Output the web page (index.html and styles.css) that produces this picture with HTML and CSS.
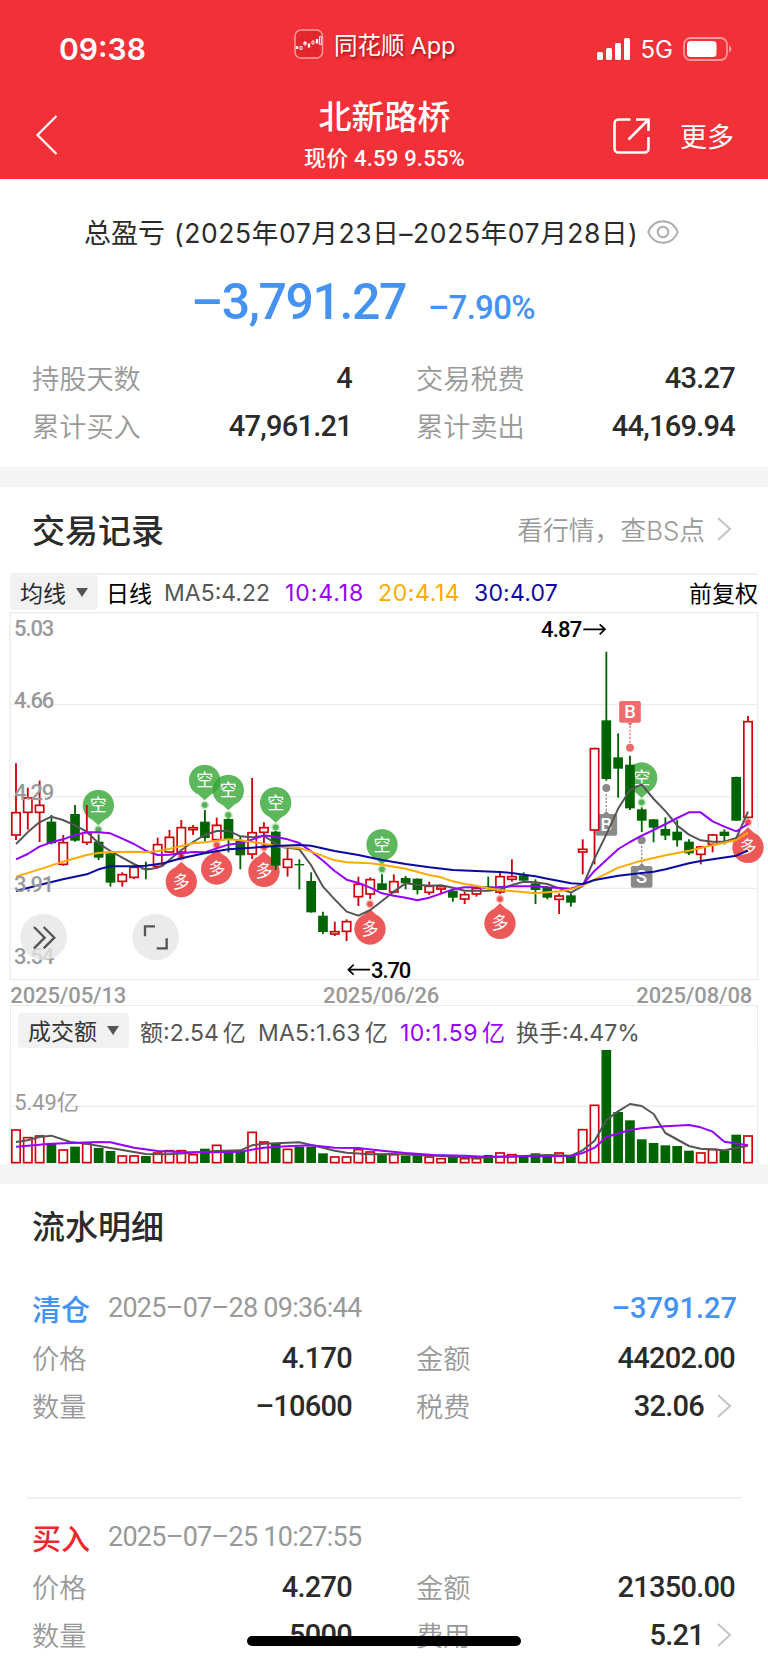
FILE: index.html
```html
<!DOCTYPE html>
<html lang="zh-CN">
<head>
  <meta charset="UTF-8" />
  <meta name="viewport" content="width=device-width, initial-scale=1" />
  <title>北新路桥 - 交易记录</title>
  <link rel="stylesheet" href="styles.css">
</head>
<body>
  <header class="header">
    <div class="status-bar">
      <span class="time">09:38</span>
      <div class="app">
        <svg class="app-icon" width="30" height="30" viewBox="0 0 30 30">
          <rect x="1" y="1" width="27.500" height="28" rx="6" fill="#e4282d" stroke="#ff9a9c" stroke-width="1.500" />
          <path d="M2 22h25M2 11h25M8 3v24M14 3v24M21 3v24" stroke="#d5222a" stroke-width=".6" />
          <path d="M3 17v3M11 13v1.500M15 14.500v4M23 10v4.500" stroke="#fff" stroke-width="2.400" />
          <path d="M6 17.500h2v3H6zM10 13h2v3h-2zM18 12h2v3h-2zM25.500 7.500h1.800v8h-1.800z" fill="none" stroke="#fff" stroke-width=".9" />
        </svg>
        <span>同花顺<i>App</i></span>
      </div>
      <div class="phone">
        <svg width="35" height="24" viewBox="0 0 35 24" fill="#fff">
          <rect x="1" y="15" width="6" height="8" rx="1.500" />
          <rect x="10" y="11" width="6" height="12" rx="1.500" />
          <rect x="19" y="6" width="6" height="17" rx="1.500" />
          <rect x="28" y="1" width="6" height="22" rx="1.500" />
        </svg>
        <span>5G</span>
        <svg width="49" height="24" viewBox="0 0 49 24">
          <rect x="1" y="1" width="43" height="22" rx="6.500" fill="none" stroke="#fff" stroke-opacity=".5" stroke-width="1.800" />
          <rect x="4" y="4" width="29.500" height="16" rx="3.500" fill="#fff" />
          <path d="M46 8.500q2.500 1 2.500 3.500t-2.500 3.500z" fill="#fff" fill-opacity=".5" />
        </svg>
      </div>
    </div>
    <div class="nav">
      <svg class="back" width="24" height="42" viewBox="0 0 24 42" fill="none" stroke="#fff" stroke-width="2.200">
        <path d="M21.500 2L2.500 21l19 19" />
      </svg>
      <div class="nav-title">
        <h1>北新路桥</h1>
        <p>现价 4.59 9.55%</p>
      </div>
      <div class="nav-right">
        <svg width="38" height="38" viewBox="0 0 38 38" fill="none" stroke="#fff" stroke-width="2.600">
          <path d="M18.500 2.500H6.500a4 4 0 0 0-4 4v25a4 4 0 0 0 4 4h26a4 4 0 0 0 4-4V20M24 2.500h12.500V14M36 3L16.500 22.500" />
        </svg>
        <span>更多</span>
      </div>
    </div>
  </header>

  <section class="summary">
    <div class="period">
      <span class="period-name">总盈亏</span>
      <span class="period-date">(2025年07月23日–2025年07月28日)</span>
      <svg width="32" height="24" viewBox="0 0 32 24" fill="none" stroke="#aaa" stroke-width="1.900">
        <path d="M1.200 12C4 5 9.500 1.200 16 1.200S28 5 30.800 12C28 19 22.500 22.800 16 22.800S4 19 1.200 12z" />
        <circle cx="16" cy="12" r="5.300" />
      </svg>
    </div>
    <div class="profit">
      <span class="profit-num">–3,791.27</span>
      <span class="profit-rate">–7.90%</span>
    </div>
    <div class="grid">
      <div class="cell"><label>持股天数</label><b>4</b></div>
      <div class="cell"><label>交易税费</label><b>43.27</b></div>
      <div class="cell"><label>累计买入</label><b>47,961.21</b></div>
      <div class="cell"><label>累计卖出</label><b>44,169.94</b></div>
    </div>
  </section>

  <section class="trade">
    <div class="section-head">
      <h2>交易记录</h2>
      <div class="more">
        <span>看行情，查BS点</span>
        <svg width="16" height="24" viewBox="0 0 16 24" fill="none" stroke="#c4c4c4" stroke-width="2"><path d="M2 1l12 11L2 23" /></svg>
      </div>
    </div>
    <div class="ma-bar">
      <span class="chip">均线<i class="arrow"></i></span>
      <span class="day">日线</span>
      <span class="ma5">MA5:4.22</span>
      <span class="ma10">10:4.18</span>
      <span class="ma20">20:4.14</span>
      <span class="ma30">30:4.07</span>
      <span class="adjust">前复权</span>
    </div>
    <svg id="price" class="price" viewBox="0 0 2304 1185"></svg>
    <div class="vol-bar">
      <span class="chip chip-vol">成交额<i class="arrow"></i></span>
      <span class="v1">额:2.54<em>亿</em></span>
      <span class="v2">MA5:1.63<em>亿</em></span>
      <span class="v3">10:1.59<em>亿</em></span>
      <span class="v4">换手:4.47%</span>
    </div>
    <svg id="volume" class="volume" viewBox="0 237 2304 345"></svg>
  </section>

  <section class="flow">
    <h2>流水明细</h2>
    <div class="record">
      <div class="record-head">
        <strong class="sell">清仓</strong>
        <time>2025–07–28 09:36:44</time>
        <b class="sell">–3791.27</b>
      </div>
      <div class="grid">
        <div class="cell"><label>价格</label><b>4.170</b></div>
        <div class="cell"><label>金额</label><b>44202.00</b></div>
        <div class="cell"><label>数量</label><b>–10600</b></div>
        <div class="cell">
          <label>税费</label><b>32.06</b>
          <svg width="16" height="24" viewBox="0 0 16 24" fill="none" stroke="#c4c4c4" stroke-width="2"><path d="M2 1l12 11L2 23" /></svg>
        </div>
      </div>
    </div>
    <div class="record record-buy">
      <div class="record-head">
        <strong class="buy">买入</strong>
        <time>2025–07–25 10:27:55</time>
      </div>
      <div class="grid">
        <div class="cell"><label>价格</label><b>4.270</b></div>
        <div class="cell"><label>金额</label><b>21350.00</b></div>
        <div class="cell"><label>数量</label><b>5000</b></div>
        <div class="cell">
          <label>费用</label><b>5.21</b>
          <svg width="16" height="24" viewBox="0 0 16 24" fill="none" stroke="#c4c4c4" stroke-width="2"><path d="M2 1l12 11L2 23" /></svg>
        </div>
      </div>
    </div>
  </section>
  <div class="home-bar"></div>

  <script src="chart.js"></script>
</body>
</html>
```
FILE: styles.css
```css
* {
  box-sizing: border-box;
}
body {
  margin: 0;
  width: 768px;
  height: 1663px;
  overflow: hidden;
  background: #fff;
  color: #2b2b2b;
  font-family: Inter, "Noto Sans CJK SC", sans-serif;
}
h1, h2, p {
  margin: 0;
}
i, em {
  font-style: normal;
}
svg {
  display: block;
  flex: none;
}

/* 顶部 */
.header {
  height: 179px;
  background: #f23038;
  color: #fff;
}
.status-bar {
  height: 92px;
  display: grid;
  grid-template-columns: 235px auto 1fr;
  align-items: center;
  padding: 6px 36px 0 59px;
}
.time {
  font-size: 30px;
  font-weight: 600;
}
.app {
  display: flex;
  align-items: center;
  gap: 10px;
  margin-bottom: 10px;
  font-size: 23.5px;
  text-shadow: 1px 2px 3px rgba(80, 0, 0, 0.6);
}
.app i {
  margin-left: 6px;
}
.phone {
  display: flex;
  justify-content: flex-end;
  align-items: center;
  gap: 10px;
  font-size: 24px;
}
.nav {
  height: 87px;
  display: grid;
  grid-template-columns: 1fr auto 1fr;
  padding: 0 34px 0 35px;
}
.back {
  margin-top: 22px;
}
.nav-title {
  padding-top: 1px;
  text-align: center;
}
.nav-title h1 {
  font-size: 33px;
  font-weight: 500;
  line-height: 48px;
}
.nav-title p {
  font-family: Roboto, "Noto Sans CJK SC", sans-serif;
  font-size: 22px;
  font-weight: 500;
  letter-spacing: 0.2px;
  line-height: 35px;
}
.nav-right {
  display: flex;
  justify-content: flex-end;
  align-items: center;
  gap: 30px;
  font-size: 27px;
  height: 87px;
}

/* 盈亏汇总 */
.summary {
  height: 288px;
  padding: 31px 33px 0 32px;
}
.period {
  display: flex;
  align-items: center;
  height: 43px;
  padding-left: 52px;
  font-size: 27px;
}
.period-name {
  margin-right: 9px;
}
.period-date {
  margin-right: 9px;
  font-size: 26.5px;
  letter-spacing: 0.6px;
}
.profit {
  display: flex;
  align-items: baseline;
  gap: 22px;
  height: 101px;
  padding: 20px 0 0 159px;
  color: #4592f2;
  font-family: Roboto, sans-serif;
  font-weight: 500;
}
.profit-num {
  font-size: 50px;
  letter-spacing: -1.4px;
}
.profit-rate {
  font-size: 33px;
  letter-spacing: -0.7px;
}
.grid {
  display: grid;
  grid-template-columns: 320px 319px;
  grid-auto-rows: 48px;
  column-gap: 64px;
}
.cell {
  display: flex;
  align-items: center;
  justify-content: flex-end;
}
.cell label {
  margin: -3px auto 0 0;
  color: #999;
  font-size: 27.2px;
  font-weight: 350;
}
.cell b, .record-head b {
  font-family: Roboto, sans-serif;
  font-size: 29px;
  font-weight: 500;
}
.cell b {
  letter-spacing: -0.75px;
}
.cell svg {
  margin: 0 3px 0 12px;
}

/* 交易记录 */
.trade {
  border-top: 20px solid #f4f4f4;
  border-bottom: 20px solid #f4f4f4;
}
h2 {
  font-size: 33px;
  font-weight: 500;
}
.section-head {
  height: 86px;
  padding: 0 36px 3px 32px;
  display: flex;
  justify-content: space-between;
  align-items: center;
}
.more {
  display: flex;
  align-items: center;
  gap: 11px;
  color: #999;
  font-size: 25.8px;
  font-weight: 350;
}
.ma-bar {
  height: 37px;
  margin: 0 10px;
  border-top: 2px solid #f0f0f0;
  display: flex;
  align-items: center;
  font-size: 23px;
}
.ma-bar span {
  white-space: nowrap;
}
.chip {
  display: flex;
  align-items: center;
  width: 88px;
  height: 35px;
  padding: 0 0 2px 10px;
  border-radius: 4px;
  background: #f1f1f1;
}
.arrow {
  margin: 2px 0 0 10px;
  border: 6px solid transparent;
  border-top: 9px solid #555;
  border-bottom: 0;
}
.day {
  margin: -2px 0 0 8px;
  width: 58px;
  color: #000;
}
.ma5 {
  width: 121px;
  color: #555;
}
.ma10 {
  width: 93px;
  color: #9500ff;
  letter-spacing: 0.9px;
}
.ma20 {
  width: 96px;
  color: #ffaa00;
  letter-spacing: 0.6px;
}
.ma30 {
  color: #0a0aa0;
  letter-spacing: 0.2px;
}
.adjust {
  margin: -2px 0 0 auto;
  color: #000;
}
.price {
  width: 768px;
  height: 395px;
  overflow: visible;
}
.vol-bar {
  height: 44px;
  margin: 0 10px;
  padding: 8px 0 0 7px;
  border: 1px solid #ececec;
  border-bottom: 0;
  display: flex;
  align-items: center;
  color: #555;
  font-size: 23px;
  white-space: nowrap;
}
.vol-bar span {
  margin-top: -2px;
}
.vol-bar em {
  margin-left: 4px;
}
.chip-vol {
  width: 111px;
  color: #333;
}
.vol-bar .v1 {
  margin-left: 11px;
  width: 118px;
}
.v2 {
  width: 142px;
  letter-spacing: 0.2px;
}
.v3 {
  width: 116px;
  color: #9500ff;
  letter-spacing: 0.5px;
}
.volume {
  width: 768px;
  height: 115px;
}
svg text {
  font-family: Roboto, "Noto Sans CJK SC", sans-serif;
}

/* 流水明细 */
.flow {
  height: 479px;
  overflow: hidden;
}
.flow h2 {
  height: 86px;
  padding-left: 32px;
  line-height: 86px;
}
.record {
  padding: 14px 33px 0 32px;
}
.record-head {
  display: flex;
  align-items: center;
  height: 50px;
}
.record-head strong {
  margin-top: -3px;
  font-size: 29px;
  font-weight: 500;
}
.record-head time {
  margin: -2px 0 0 18px;
  color: #999;
  font-family: Roboto, sans-serif;
  font-size: 27px;
  letter-spacing: -0.75px;
}
.record-head b {
  margin: -2px -2px 0 auto;
}
.sell {
  color: #4592f2;
}
.buy {
  color: #f0262d;
}
.record-buy {
  position: relative;
  margin-top: 67px;
  padding-top: 16px;
}
.record-buy::before {
  content: "";
  position: absolute;
  left: 27px;
  right: 26px;
  top: 0;
  height: 2px;
  background: #f0f0f0;
}
.home-bar {
  position: absolute;
  left: 247px;
  top: 1636px;
  width: 274px;
  height: 10px;
  border-radius: 5px;
  background: #000;
}
```
FILE: chart.js
```js
const RED = "#d0000a";
const GREEN = "#006400";
const x = i => 48 + i * 35.42;

// [color, high, low, top, bottom]
const candles = [
  ["r",460,690,607,676],["r",533,659,563,608],["r",512,696,585,608],["g",615,703,635,700],
  ["r",675,767,697,764],["g",585,695,612,692],["r",585,705,667,698],["g",673,750,695,743],
  ["g",728,830,730,818],["r",787,830,793,815],["r",768,807,771,803],["g",755,808,774,778],
  ["r",683,772,703,770],["r",660,728,681,727],["r",630,740,652,727],["r",645,675,652,660],
  ["g",600,695,635,684],["r",623,690,645,690],["g",625,727,627,687],["g",678,778,690,736],
  ["r",504,747,667,733],["r",637,710,652,668],["g",663,780,665,767],["r",712,800,747,773],
  ["g",748,838,762,766],["g",787,908,813,907],["g",905,972,917,966],["r",935,978,964,973],
  ["r",928,993,934,965],["r",800,888,822,861],["r",802,867,808,853],["g",793,840,820,840],
  ["r",793,850,814,847],["g",798,838,804,820],["g",805,853,806,840],["r",815,855,828,848],
  ["r",825,850,829,838],["g",840,875,842,863],["r",845,882,853,868],["r",832,860,834,853],
  ["g",800,838,829,832],["r",787,852,799,847],["r",748,815,799,809],["g",787,815,796,812],
  ["g",808,882,820,840],["g",828,868,831,863],["r",850,912,857,869],["g",850,890,856,878],
  ["r",688,793,717,727],["r",413,763,415,661],["g",125,512,331,507],["g",370,563,442,476],
  ["g",437,600,464,595],["g",592,666,598,632],["g",627,697,628,653],["g",622,690,657,677],
  ["g",630,710,665,691],["g",688,735,695,730],["r",708,763,710,734],["r",673,727,674,704],
  ["g",658,703,665,678],["g",500,633,501,632],["r",318,625,334,623]
];
const volumes = [
  479,502,497,521,539,530,520,534,543,557,557,558,548,541,541,553,536,525,541,545,486,
  515,521,537,530,530,550,560,560,538,545,553,553,557,556,560,565,560,565,565,555,548,
  553,558,550,557,548,558,478,405,240,426,451,508,519,526,528,542,548,537,541,494,497
];
const maLines = [
  ["#555", "48,702 83,667 118,637 154,620 189,630 225,646 260,665 296,700 331,723 367,743 402,762 437,779 473,773 490,766 508,750 544,720 579,696 614,675 650,663 685,662 721,679 756,682 792,678 827,700 850,712 898,718 933,765 969,830 1004,868 1040,905 1075,917 1111,900 1146,873 1181,845 1217,820 1252,824 1288,827 1323,826 1359,833 1394,842 1465,842 1500,838 1536,825 1571,815 1606,817 1642,822 1678,835 1713,848 1748,828 1784,745 1819,673 1855,595 1890,540 1925,523 1961,567 1997,604 2032,647 2067,674 2102,691 2138,695 2173,695 2209,684 2244,605"],
  ["#9500ff", "48,748 83,732 118,710 154,697 189,688 225,675 260,667 296,667 331,670 367,686 402,702 437,722 473,735 508,734 544,730 579,726 614,727 650,715 685,704 721,699 756,689 792,676 827,681 863,688 898,699 933,724 969,752 1004,783 1040,809 1075,819 1111,833 1146,850 1181,857 1217,863 1252,871 1288,863 1323,851 1359,838 1394,832 1429,832 1465,834 1500,831 1536,829 1606,829 1642,832 1713,836 1748,824 1784,782 1819,750 1855,717 1890,696 1925,677 1961,660 1997,642 2032,624 2067,607 2102,607 2138,634 2173,650 2209,664 2244,642"],
  ["#ffaa00", "48,800 118,778 189,755 260,735 296,729 331,726 402,725 437,727 473,723 508,717 544,708 579,700 614,697 650,692 685,688 721,691 756,696 792,701 827,708 863,712 898,714 933,725 1004,751 1040,757 1111,760 1146,764 1217,776 1288,795 1323,802 1359,814 1394,822 1429,827 1465,835 1500,841 1560,845 1606,850 1678,844 1713,838 1748,826 1784,808 1855,773 1925,752 1997,736 2067,722 2138,706 2173,698 2209,690 2244,668"],
  ["#0a0aa0", "48,843 118,825 189,808 260,793 296,778 331,769 402,769 437,767 490,760 544,745 614,730 685,718 756,713 827,708 898,705 933,707 1004,723 1075,735 1146,750 1217,762 1288,772 1359,780 1429,783 1500,786 1536,789 1571,794 1606,799 1642,806 1678,813 1713,820 1748,822 1784,810 1855,797 1925,789 1961,785 1997,778 2067,760 2102,753 2138,748 2209,737 2244,722"]
];
const volLines = [
  ["#555", "48,516 83,511 118,501 154,497 211,516 260,521 331,534 367,540 437,552 508,553 579,548 650,543 721,541 756,526 792,521 898,517 969,533 1004,542 1040,548 1110,553 1181,552 1252,555 1323,558 1394,562 1429,563 1500,560 1571,558 1642,555 1713,557 1748,541 1784,512 1819,450 1854,424 1890,402 1925,408 1961,432 1996,489 2067,528 2102,536 2173,541 2244,527"],
  ["#9500ff", "48,530 154,521 296,516 331,517 402,533 473,543 544,546 650,547 721,545 792,533 862,529 933,526 1004,533 1075,534 1146,542 1217,549 1300,555 1394,557 1465,561 1571,559 1713,558 1748,549 1784,533 1819,501 1890,480 1925,475 1996,469 2067,465 2102,472 2138,485 2173,515 2244,526"]
];

function body(i, color, top, bottom) {
  if (color === "g") return `<rect x="${x(i) - 14.5}" y="${top}" width="29" height="${Math.max(bottom - top, 4)}" fill="${GREEN}"/>`;
  return `<rect x="${x(i) - 12.5}" y="${top + 1}" width="25" height="${Math.max(bottom - top - 2, 3)}" fill="#fff" stroke="${RED}" stroke-width="5"/>`;
}
function candle([color, high, low, top, bottom], i) {
  const c = color === "g" ? GREEN : RED;
  return `<path d="M${x(i)} ${high}V${low}" stroke="${c}" stroke-width="5.500"/>` + body(i, color, top, bottom);
}
function line([color, points]) {
  return `<polyline points="${points}" fill="none" stroke="${color}" stroke-width="6" stroke-linejoin="round"/>`;
}
function text(tx, y, w, str, fill = "#999", size = 66, weight = 500) {
  return `<text x="${tx}" y="${y}" textLength="${w}" font-size="${size}" font-weight="${weight}" fill="${fill}">${str}</text>`;
}
// 多 / 空 气泡
function pin(cx, cy, dot, word) {
  const c = word === "空" ? "#34a634" : "#e93030";
  const d = dot > cy ? 1 : -1;
  return `<g fill="${c}" fill-opacity=".8">
    <path d="M${cx - 18} ${cy + d * 43.4}A47 47 0 1 ${d > 0 ? 1 : 0} ${cx + 18} ${cy + d * 43.4}L${cx} ${cy + d * 60}z"/>
    <circle cx="${cx}" cy="${dot}" r="13" fill-opacity=".3"/><circle cx="${cx}" cy="${dot}" r="8.500"/></g>
    <text x="${cx}" y="${cy + 18}" text-anchor="middle" font-size="51" fill="#fff">${word}</text>`;
}
function tag(cx, top, dot, word, c) {
  const down = dot > top;
  const edge = down ? top + 65 : top;
  const d = down ? 1 : -1;
  return `<g fill="${c}"><rect x="${cx - 32.5}" y="${top}" width="65" height="65" rx="6"/>
    <path d="M${cx - 9} ${edge}h18l-9 ${d * 9}z"/><circle cx="${cx}" cy="${dot}" r="12"/></g>
    <path d="M${cx} ${edge + d * 10}V${dot - d * 14}" stroke="${c}" stroke-width="4" stroke-dasharray="6 5"/>
    <text x="${cx}" y="${top + 52}" text-anchor="middle" font-size="55" font-weight="500" fill="#fff">${word}</text>`;
}

document.getElementById("price").innerHTML = `
  <path d="M30 8H2273V1109H30zM30 284H2273M30 560H2273M30 835H2273" fill="none" stroke="#ececec" stroke-width="4"/>` +
  [[295,586,659],[614,511,585],[685,541,615],[827,578,652],[1146,704,778],[1925,504,577]].map(p => pin(...p, "空")).join("") +
  [[544,815,740],[650,777,705],[792,784,712],[1110,957,882],[1500,940,867],[2244,712,637]].map(p => pin(...p, "多")).join("") +
  tag(1890, 273, 413, "B", "#ef6c6c") + tag(1819, 612, 534, "B", "#8a8a8a") + tag(1925, 768, 691, "S", "#8a8a8a") +
  candles.map(candle).join("") + maLines.map(line).join("") +
  text(42, 77, 121, "5.03") + text(42, 293, 121, "4.66") + text(42, 569, 121, "4.29") + text(42, 845, 121, "3.91") + text(42, 1061, 121, "3.54") +
  text(1623, 82, 124, "4.87", "#000") + text(1113, 1103, 121, "3.70", "#000") +
  `<path d="M1750 58H1815M1799 43L1815 58L1799 73M1110 1079H1045M1061 1064L1045 1079L1061 1094" fill="none" stroke="#000" stroke-width="5"/>` +
  text(31, 1179, 348, "2025/05/13") + text(969, 1179, 349, "2025/06/26") + text(1909, 1179, 348, "2025/08/08") +
  `<circle cx="131" cy="981" r="70" fill="#e6e6e6" fill-opacity=".78"/><circle cx="467" cy="981" r="70" fill="#e6e6e6" fill-opacity=".78"/>
  <path d="M102 951L134 983L102 1015M131 951L163 983L131 1015M435 979V949H465M500 985V1015H470" fill="none" stroke="#555" stroke-width="7"/>`;

document.getElementById("volume").innerHTML = `
  <path d="M31 237V580M2273 237V580M31 409H2273" fill="none" stroke="#ececec" stroke-width="4"/>` +
  volumes.map((top, i) => body(i, candles[i][0], top, 579)).join("") + volLines.map(line).join("") +
  text(43, 419, 193, "5.49亿", "#999", 66, 400);
```
